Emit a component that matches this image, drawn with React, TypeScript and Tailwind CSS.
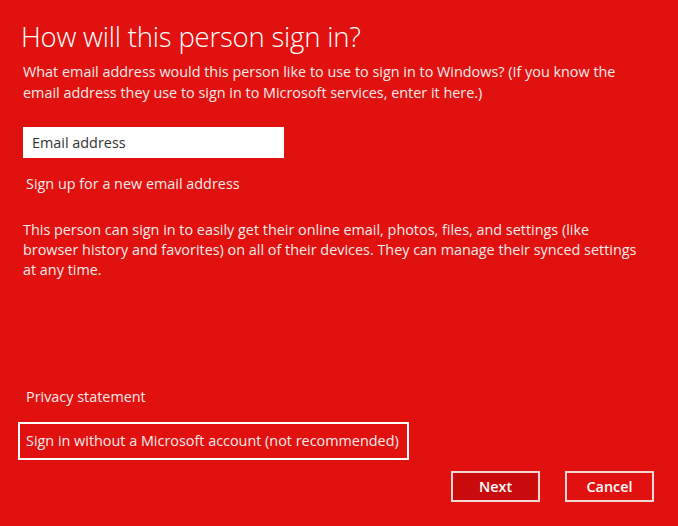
import React from "react";

export default function App() {
  return (
    <div
      className="w-[678px] h-[526px] bg-[#e0110f] text-white flex flex-col overflow-hidden"
      style={{ fontFamily: '"Open Sans", "Noto Sans", sans-serif' }}
    >
      <div className="pl-[21px] pt-[19px]">
        <h1 className="text-[27.5px] leading-[35px] font-light tracking-[-0.2px]">How will this person sign in?</h1>
        <p className="mt-[7px] pl-[2px] text-[14.4px] leading-[21px] w-[612px] text-[#fbeaea]">
          What email address would this person like to use to sign in to Windows? (If you know the email address they use to sign in to Microsoft services, enter it here.)
        </p>
        <div className="mt-[24px] ml-[2px] w-[261px] h-[31px] bg-white flex items-center pl-[9px] text-[14.4px] text-[#333]">
          Email address
        </div>
        <div className="mt-[16px] pl-[5px] text-[14.4px] leading-[20px] text-[#fbeaea]">Sign up for a new email address</div>
        <p className="mt-[26px] pl-[2px] text-[14.4px] leading-[20px] w-[640px] text-[#fbeaea]">
          This person can sign in to easily get their online email, photos, files, and settings (like
          <br />
          browser history and favorites) on all of their devices. They can manage their synced settings
          <br />
          at any time.
        </p>
      </div>
      <div className="flex-1" />
      <div className="pl-[18px]">
        <div className="pl-[8px] text-[14.4px] leading-[20px] text-[#fbeaea]">Privacy statement</div>
        <div className="mt-[15px] w-[391px] h-[38px] border-2 border-white flex items-center pl-[6px] text-[14.4px] text-[#fbeaea]">
          Sign in without a Microsoft account (not recommended)
        </div>
      </div>
      <div className="flex justify-end gap-[25px] pr-[24px] pt-[11px] pb-[24px]">
        <button className="w-[89px] h-[31px] border-2 border-[#f3d6d6] bg-[#c90b0b] text-[14.4px] font-semibold text-white">Next</button>
        <button className="w-[89px] h-[31px] border-2 border-[#f3d6d6] bg-[#e0110f] text-[14.4px] font-semibold text-white">Cancel</button>
      </div>
    </div>
  );
}
